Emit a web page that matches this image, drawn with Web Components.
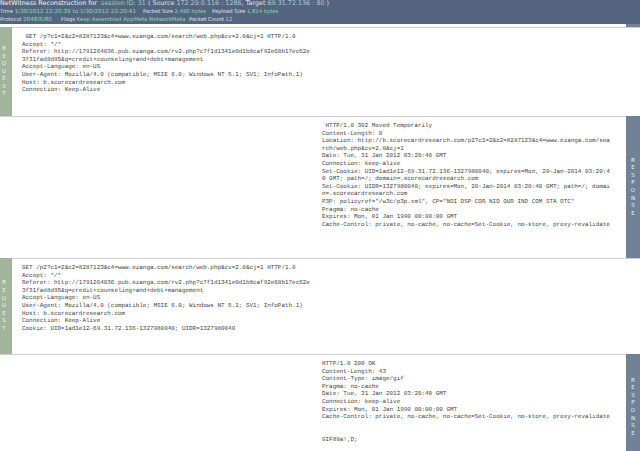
<!DOCTYPE html>
<html>
<head>
<meta charset="utf-8">
<style>
html,body{margin:0;padding:0;background:#fff;}
body{width:640px;height:451px;overflow:hidden;}
</style>
</head>
<body>
<nw-header>
<nw-line slot="l1" style="--val:6.4px;font-size:6.4px;height:7.5px;line-height:7.5px"><span style="color:#f4f6f8">NetWitness Reconstruction for&nbsp;</span><nw-val>session ID: 31</nw-val> ( Source <nw-val tone="soft">172.29.0.116 : 1286</nw-val>, Target <nw-val tone="soft">69.31.72.136 : 80</nw-val> )</nw-line>
<nw-line slot="l2"><span style="width:143px">Time <nw-val>1/30/2012 22:20:39 to 1/30/2012 22:20:41</nw-val></span><span style="width:69px">Packet Size <nw-val style="font-size:5.3px">2,490 bytes</nw-val></span><span>Payload Size <nw-val style="font-size:5.3px">1,814 bytes</nw-val></span></nw-line>
<nw-line slot="l3"><span style="width:61px">Protocol <nw-val>2048/6/80</nw-val></span><span style="width:128px">Flags <nw-val style="font-size:5.45px">Keep Assembled AppMeta NetworkMeta</nw-val></span><span>Packet Count <nw-val>12</nw-val></span></nw-line>
</nw-header>
<nw-packet kind="request" style="--h:89px"> GET /p?c1=2&amp;c2=8287123&amp;c4=www.ezanga.com/search/web.php&amp;cv=2.0&amp;cj=1 HTTP/1.0
Accept: */*
Referer: http://1791264036.pub.ezanga.com/rv2.php?c7f1d1341e0d1b8caf92e68b17ec62e
3f31fad8d95&amp;q=credit+counseling+and+debt+management
Accept-Language: en-US
User-Agent: Mozilla/4.0 (compatible; MSIE 6.0; Windows NT 5.1; SV1; InfoPath.1)
Host: b.scorecardresearch.com
Connection: Keep-Alive</nw-packet>
<nw-packet kind="response" style="--h:142px"> HTTP/1.0 302 Moved Temporarily
Content-Length: 0
Location: http://b.scorecardresearch.com/p2?c1=2&amp;c2=8287123&amp;c4=www.ezanga.com/sea
rch/web.php&amp;cv=2.0&amp;cj=1
Date: Tue, 31 Jan 2012 03:20:40 GMT
Connection: keep-alive
Set-Cookie: UID=1ad1e12-69.31.72.136-1327980040; expires=Mon, 20-Jan-2014 03:20:4
0 GMT; path=/; domain=.scorecardresearch.com
Set-Cookie: UIDR=1327980040; expires=Mon, 20-Jan-2014 03:20:40 GMT; path=/; domai
n=.scorecardresearch.com
P3P: policyref="/w3c/p3p.xml", CP="NOI DSP COR NID OUR IND COM STA OTC"
Pragma: no-cache
Expires: Mon, 01 Jan 1990 00:00:00 GMT
Cache-Control: private, no-cache, no-cache=Set-Cookie, no-store, proxy-revalidate</nw-packet>
<nw-packet kind="request" style="--h:96px">GET /p2?c1=2&amp;c2=8287123&amp;c4=www.ezanga.com/search/web.php&amp;cv=2.0&amp;cj=1 HTTP/1.0
Accept: */*
Referer: http://1791264036.pub.ezanga.com/rv2.php?c7f1d1341e0d1b8caf92e68b17ec62e
3f31fad8d95&amp;q=credit+counseling+and+debt+management
Accept-Language: en-US
User-Agent: Mozilla/4.0 (compatible; MSIE 6.0; Windows NT 5.1; SV1; InfoPath.1)
Host: b.scorecardresearch.com
Connection: Keep-Alive
Cookie: UID=1ad1e12-69.31.72.136-1327980040; UIDR=1327980040</nw-packet>
<nw-packet kind="response" style="--h:106px">HTTP/1.0 200 OK
Content-Length: 43
Content-Type: image/gif
Pragma: no-cache
Date: Tue, 31 Jan 2012 03:20:40 GMT
Connection: keep-alive
Expires: Mon, 01 Jan 1990 00:00:00 GMT
Cache-Control: private, no-cache, no-cache=Set-Cookie, no-store, proxy-revalidate


GIF89a!,D;</nw-packet>
<script>
const headerTpl = document.createElement('template');
headerTpl.innerHTML = `
<style>
:host{display:block;}
.bar{height:24px;background:#56657f;color:#dfe4ea;overflow:hidden;}
.tail{height:3px;display:flex;justify-content:flex-end;}
.tail div{width:14px;background:#6f8297;}
</style>
<div class="bar"><slot name="l1"></slot><slot name="l2"></slot><slot name="l3"></slot></div>
<div class="tail"><div></div></div>`;

class NwHeader extends HTMLElement{
    constructor(){
    super();
    this.attachShadow({mode:"open"});
    this.shadowRoot.appendChild(headerTpl.content.cloneNode(true));
    }
}

const lineTpl = document.createElement('template');
lineTpl.innerHTML = `
<style>
:host{display:block;height:8px;line-height:8px;white-space:nowrap;font-family:"DejaVu Sans",sans-serif;font-size:5.3px;text-rendering:geometricPrecision;}
::slotted(span){display:inline-block;}
</style>
<slot></slot>`;

class NwLine extends HTMLElement{
    constructor(){
    super();
    this.attachShadow({mode:"open"});
    this.shadowRoot.appendChild(lineTpl.content.cloneNode(true));
    }
}

const valTpl = document.createElement('template');
valTpl.innerHTML = `
<style>
:host{color:#84dcae;font-size:var(--val,5.65px);}
:host([tone=soft]){color:#a4d2d0;}
</style>
<slot></slot>`;

class NwVal extends HTMLElement{
    constructor(){
    super();
    this.attachShadow({mode:"open"});
    this.shadowRoot.appendChild(valTpl.content.cloneNode(true));
    }
}

const packetTpl = document.createElement('template');
packetTpl.innerHTML = `
<style>
:host{display:block;height:var(--h);}
.row{display:flex;height:100%;}
.tab{flex:none;box-sizing:border-box;display:flex;flex-direction:column;align-items:center;justify-content:center;font:5.5px/7.6px "DejaVu Sans",sans-serif;color:#f2f4f2;}
.body{flex:1;min-width:0;box-sizing:border-box;border-top:1px solid #cdd2cc;padding-top:5px;}
pre{margin:0;font:5.93px/7.6px "Liberation Mono",monospace;color:#444;white-space:pre;text-rendering:geometricPrecision;}
:host([kind=request]) .tab{width:12px;padding-right:4px;background:#a3b49c;}
:host([kind=request]) .body{padding-left:10px;}
:host([kind=response]) .tab{width:14px;background:#6f8297;order:2;}
:host([kind=response]) .body{padding-left:322px;}
</style>
<div class="row"><div class="tab"></div><div class="body"><pre><slot></slot></pre></div></div>`;

class NwPacket extends HTMLElement{
    constructor(){
    super();
    this.attachShadow({mode:"open"});
    this.shadowRoot.appendChild(packetTpl.content.cloneNode(true));
    const tab=this.shadowRoot.querySelector('.tab');
    tab.innerHTML=this.getAttribute('kind').toUpperCase().split('').map(c=>`<span>${c}</span>`).join('');
    }
}

window.customElements.define('nw-header',NwHeader);
window.customElements.define('nw-line',NwLine);
window.customElements.define('nw-val',NwVal);
window.customElements.define('nw-packet',NwPacket);
</script>
</body>
</html>
